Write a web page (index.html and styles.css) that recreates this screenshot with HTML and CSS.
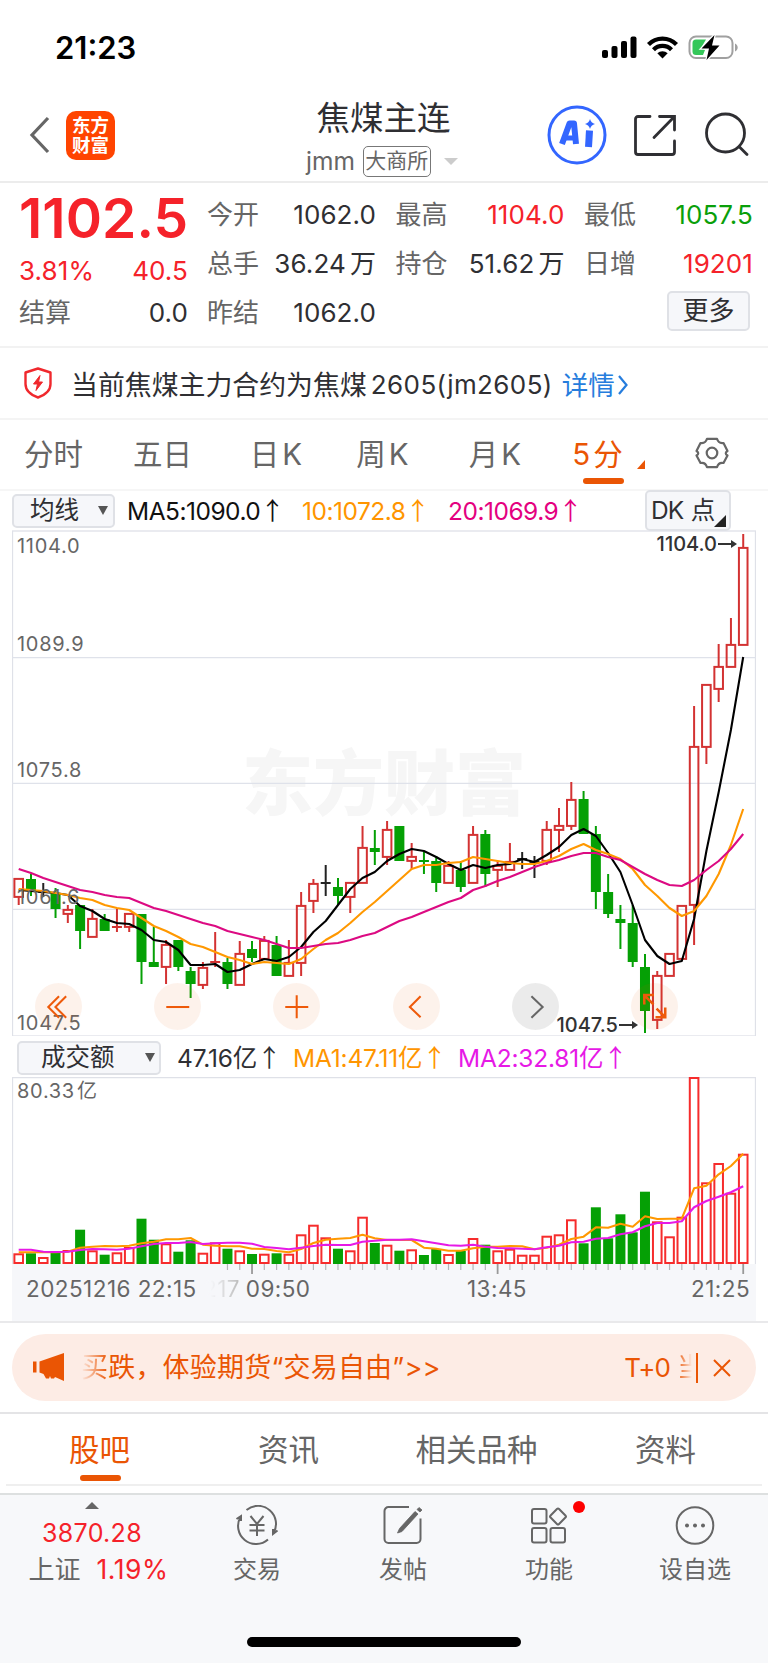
FILE: index.html
```html
<!DOCTYPE html>
<html lang="zh-CN">
    <head>
        <meta charset="utf-8">
        <title>焦煤主连</title>
        <link rel="stylesheet" href="styles.css">
    </head>
    <body>
        <div class="status-bar">
            <span class="clock">21:23</span>
            <svg class="status-icons" width="140" height="28" viewBox="0 0 140 28">
                <rect x="2" y="15" width="6" height="8" rx="2"/>
                <rect x="11.5" y="11" width="6" height="12" rx="2"/>
                <rect x="21" y="6" width="6" height="17" rx="2"/>
                <rect x="30.500" y="1.500" width="6" height="21.500" rx="2"/>
                <g fill="none" stroke="#000" stroke-width="4.200">
                    <path d="M48.500 9.500a19.500 19.500 0 0 1 28 0"/>
                    <path d="M53.500 14.800a12.500 12.500 0 0 1 18 0"/>
                </g>
                <path d="M57.300 18.300a7.500 7.500 0 0 1 10.400 0L62.500 23.500z"/>
                <rect x="89.500" y="1.500" width="43" height="21.500" rx="6.500" fill="none" stroke="#a0a0a0" stroke-width="2"/>
                <path d="M135 8.500c3.600 1.500 3.600 6.500 0 8z" fill="#a0a0a0"/>
                <path d="M96 4.500h10l-5 8.500 4 2-2 5h-7a3.500 3.500 0 0 1-3.500-3.500v-8.500A3.500 3.500 0 0 1 96 4.500z" fill="#34c759"/>
                <path d="M114.500 0l-13 13.500h7.500l-2.500 11.500 13-14.500h-7.500z" stroke="#fff" stroke-width="2.500" paint-order="stroke"/>
            </svg>
        </div>

        <header class="header">
            <div class="header-left">
                <svg width="22" height="40" viewBox="0 0 22 40"><path d="M19 3L3 20l16 17" fill="none" stroke="#666" stroke-width="3.200"/></svg>
                <div class="logo"><span>东方</span><span>财富</span></div>
            </div>
            <div class="title">
                <h1>焦煤主连</h1>
                <div class="subtitle"><span class="code">jmm</span><span class="exchange">大商所</span><i class="arrow-down"></i></div>
            </div>
            <div class="header-right">
                <svg width="60" height="60" viewBox="0 0 60 60" fill="none" stroke="#3366ff">
                    <circle cx="30" cy="30" r="28" stroke-width="3"/>
                    <path d="M15 39L22.500 18.500h4.500L29 39" stroke-width="6" stroke-linejoin="round"/>
                    <path d="M18.500 33h9" stroke-width="5"/>
                    <path d="M42.500 25.500L41.500 42" stroke-width="7"/>
                    <path d="M43 14q1 4 5 5-4 1-5 5-1-4-5-5 4-1 5-5z" fill="#3366ff" stroke="none"/>
                </svg>
                <svg width="44" height="44" viewBox="0 0 44 44" fill="none" stroke="#2f2f33" stroke-width="2.800" stroke-linecap="round">
                    <path d="M17 3.500H5a2.500 2.500 0 0 0-2.500 2.500v33A2.500 2.500 0 0 0 5 41.500h34a2.500 2.500 0 0 0 2.500-2.500V28M26.500 3.500h15V17M41 4L21 24.500"/>
                </svg>
                <svg width="46" height="46" viewBox="0 0 46 46" fill="none" stroke="#2f2f33" stroke-width="2.800" stroke-linecap="round">
                    <circle cx="21.500" cy="21" r="19"/><path d="M35.500 35l7.500 7.500"/>
                </svg>
            </div>
        </header>

        <section class="quote">
            <div class="price-col">
                <div class="price">1102.5</div>
                <div class="pair change"><span>3.81%</span><span>40.5</span></div>
                <div class="pair"><label>结算</label><span>0.0</span></div>
            </div>
            <div class="stats">
                <div class="pair"><label>今开</label><span>1062.0</span></div>
                <div class="pair"><label>最高</label><span class="up">1104.0</span></div>
                <div class="pair"><label>最低</label><span class="down">1057.5</span></div>
                <div class="pair"><label>总手</label><span>36.24<b>万</b></span></div>
                <div class="pair"><label>持仓</label><span>51.62<b>万</b></span></div>
                <div class="pair"><label>日增</label><span class="up">19201</span></div>
                <div class="pair"><label>昨结</label><span>1062.0</span></div>
                <div></div>
                <div class="more"><button>更多</button></div>
            </div>
        </section>

        <section class="notice">
            <svg width="28" height="32" viewBox="0 0 28 32" fill="none" stroke="#f0282d" stroke-width="2.400" stroke-linejoin="round">
                <path d="M14 1.500L26.500 5.500V17c0 7-5.500 11-12.500 13.500C7 28 1.500 24 1.500 17V5.500z"/>
                <path d="M16 8.500l-6.500 8.500h4l-1.500 6.500 6.500-8.500h-4z" fill="#f0282d" stroke-width="1"/>
            </svg>
            <span class="notice-text">当前焦煤主力合约为焦煤</span><span class="notice-code">2605(jm2605)</span><a>详情</a>
            <svg class="chevron" width="12" height="22" viewBox="0 0 12 22"><path d="M2 2l7.500 9L2 20" fill="none" stroke="#267ddd" stroke-width="2.200"/></svg>
        </section>

        <nav class="periods">
            <span>分时</span>
            <span>五日</span>
            <span>日<em>K</em></span>
            <span>周<em>K</em></span>
            <span>月<em>K</em></span>
            <span class="active"><em>5</em>分</span>
            <span class="gear">
                <i class="corner"></i>
                <svg width="34" height="32" viewBox="0 0 34 32" fill="none" stroke="#666" stroke-width="2.200" stroke-linejoin="round">
                    <path d="M12 1.800h10q1.500 5 6.500 4.200l4 8q-3.500 2 0 4.500l-4 7.500q-5-1-6.500 4.200H12q-1.500-5.200-6.500-4.200l-4-7.500q3.500-2.500 0-4.500l4-8q5 .8 6.500-4.200z"/>
                    <circle cx="17" cy="16" r="5.300"/>
                </svg>
            </span>
        </nav>

        <div class="indicator">
            <button class="ma-select">均线<i></i></button>
            <span class="ma ma5">MA5:1090.0<u>↑</u></span>
            <span class="ma ma10">10:1072.8<u>↑</u></span>
            <span class="ma ma20">20:1069.9<u>↑</u></span>
            <button class="dk">DK<b>点</b><i></i></button>
        </div>

        <div class="chart kline">
            <div class="watermark">东方财富</div>
            <svg id="kline" width="744" height="506" viewBox="12 0 744 506"></svg>
            <span class="y-label y1">1104.0</span>
            <span class="y-label y2">1089.9</span>
            <span class="y-label y3">1075.8</span>
            <span class="y-label y4">1061.6</span>
            <span class="y-label y5">1047.5</span>
            <span class="mark high">1104.0<svg width="20" height="10" viewBox="0 0 20 10"><path d="M0 5h14" stroke="#333" stroke-width="2"/><path d="M13 1l6 4-6 4z" fill="#333"/></svg></span>
            <span class="mark low">1047.5<svg width="20" height="10" viewBox="0 0 20 10"><path d="M0 5h14" stroke="#333" stroke-width="2"/><path d="M13 1l6 4-6 4z" fill="#333"/></svg></span>
            <div class="tools">
                <span><svg viewBox="0 0 46 46"><path d="M23.500 13L13 23.500 23.500 34M30.500 13L20 23.500 30.500 34"/></svg></span>
                <span><svg viewBox="0 0 46 46"><path d="M12 23.500h22.500"/></svg></span>
                <span><svg viewBox="0 0 46 46"><path d="M12 23.500h22.500M23.200 12v22.500"/></svg></span>
                <span><svg viewBox="0 0 46 46"><path d="M27 13L16.500 23.500 27 33.500"/></svg></span>
                <span class="off"><svg viewBox="0 0 46 46"><path d="M19 13l11 10.500L19 34"/></svg></span>
                <span class="zoom"><svg viewBox="0 0 46 46"><path d="M22 21l-9-9M13 21v-9.200h9.500M25 25l8.500 8.500M33.500 24v9.500H24"/></svg></span>
            </div>
        </div>

        <div class="indicator volume-info">
            <button class="vol-select">成交额<i></i></button>
            <span class="ma">47.16<b>亿</b><u>↑</u></span>
            <span class="ma ma10">MA1:47.11<b>亿</b><u>↑</u></span>
            <span class="ma vma2">MA2:32.81<b>亿</b><u>↑</u></span>
        </div>

        <div class="chart volume">
            <svg id="volume" width="744" height="187" viewBox="12 0 744 187"></svg>
            <span class="y-label v1">80.33<b>亿</b></span>
        </div>
        <div class="axis">
            <svg id="ticks" width="744" height="12" viewBox="12 0 744 12"></svg>
            <div class="dates">
                <span>20251216 22:15</span>
                <span><s>217</s> 09:50</span>
                <span>13:45</span>
                <span>21:25</span>
            </div>
        </div>

        <div class="banner-wrap">
            <div class="banner">
                <svg width="32" height="30" viewBox="0 0 32 30" fill="#ea5504"><path d="M0 8.500h3.500v11H0zM6.500 8.500L31 0v28l-9-4-1 1.500h-3L17 23l-1 2.500h-3L10.500 21l-4-1.500z"/></svg>
                <span class="banner-text"><span class="fade-in">买</span>跌，体验期货“交易自由”&gt;&gt;</span>
                <span class="t0">T+0</span><span class="fade-out">当</span>
                <svg class="close" width="18" height="18" viewBox="0 0 18 18"><path d="M1 1l16 16M17 1L1 17" stroke="#ea5504" stroke-width="2"/></svg>
            </div>
        </div>

        <nav class="info-tabs">
            <span class="active">股吧</span>
            <span>资讯</span>
            <span>相关品种</span>
            <span>资料</span>
        </nav>

        <footer class="bottom-bar">
            <div class="index">
                <i></i>
                <span class="index-value">3870.28</span>
                <span class="index-row">上证<em>1.19%</em></span>
            </div>
            <div class="item">
                <svg width="44" height="40" viewBox="0 0 44 40" fill="none" stroke="#666" stroke-width="2">
                    <path d="M11.500 5A18 18 0 0 1 38.500 28M33 34.500A18 18 0 0 1 5.500 12M1.500 14l4.500-3v5M42.500 25.500l-4.500 3.500v-5"/>
                    <path d="M15.500 11l6.500 8 6.500-8M22 19v12M14.500 20h15M14.500 25.500h15"/>
                </svg>
                <span>交易</span>
            </div>
            <div class="item">
                <svg width="44" height="40" viewBox="0 0 44 40" fill="none" stroke="#666" stroke-width="2">
                    <path d="M28 2H7.500a4 4 0 0 0-4 4v28a4 4 0 0 0 4 4h28a4 4 0 0 0 4-4V13.500"/>
                    <path d="M34 6.500l3 2.500-16 17.500-4.500 1.500 2-4.500zM36 4.500l2-2 3 2.500-2 2z" fill="#666" stroke-width=".8"/>
                </svg>
                <span>发帖</span>
            </div>
            <div class="item">
                <i class="dot"></i>
                <svg width="44" height="40" viewBox="0 0 44 40" fill="none" stroke="#666" stroke-width="2">
                    <rect x="5" y="4" width="14.500" height="14.500" rx="2"/><rect x="5" y="23" width="14.500" height="14.500" rx="2"/><rect x="23.500" y="23" width="14.500" height="14.500" rx="2"/>
                    <rect x="25" y="5.500" width="12" height="12" rx="1.500" transform="rotate(45 31 11.500)"/>
                </svg>
                <span>功能</span>
            </div>
            <div class="item">
                <svg width="44" height="40" viewBox="0 0 44 40"><circle cx="22" cy="20.500" r="18.300" fill="none" stroke="#666" stroke-width="2"/><g fill="#666"><circle cx="14" cy="20.500" r="2"/><circle cx="22" cy="20.500" r="2"/><circle cx="30" cy="20.500" r="2"/></g></svg>
                <span>设自选</span>
            </div>
            <div class="home-indicator"></div>
        </footer>
        <script src="chart.js"></script>
    </body>
</html>
```
FILE: styles.css
```css
* {
    box-sizing: border-box;
}
body {
    margin: 0;
    width: 768px;
    background: #fff;
    color: #2f2f33;
    font-family: Inter, "Noto Sans CJK SC", sans-serif;
    font-size: 26px;
    line-height: 1;
    white-space: nowrap;
}
svg {
    display: block;
    flex: none;
}
b, em, i, u, s {
    font-weight: inherit;
    font-style: normal;
    text-decoration: none;
}
button {
    font: inherit;
    color: inherit;
    padding: 0;
    background: #f6f7fa;
    border: 2px solid #dfe1e6;
    border-radius: 5px;
}

/* status bar + header */
.status-bar {
    height: 92px;
    padding: 35px 28px 0 55px;
    display: flex;
    justify-content: space-between;
}
.clock {
    font-size: 31px;
    font-weight: 600;
    line-height: 26px;
    color: #000;
}
.header {
    height: 91px;
    border-bottom: 2px solid #ececec;
    display: grid;
    grid-template-columns: 290px 184px 1fr;
}
.header-left {
    display: flex;
    align-items: center;
    gap: 15px;
    padding: 0 0 3px 29px;
}
.logo {
    width: 49px;
    height: 49px;
    border-radius: 10px;
    background: #ff4400;
    color: #fff;
    font-size: 18.500px;
    font-weight: 700;
    line-height: 20px;
    padding-top: 4px;
    text-align: center;
}
.logo span {
    display: block;
}
.title {
    text-align: center;
}
h1 {
    margin: 7px 0 0 3px;
    font-size: 33.500px;
    line-height: 38px;
    font-weight: 400;
}
.subtitle {
    display: flex;
    align-items: center;
    margin: 9px 0 0 16px;
    font-size: 24.500px;
    color: #666;
}
.exchange {
    margin: 0 13px 0 8px;
    width: 68px;
    height: 31px;
    border: 1.5px solid #777;
    border-radius: 5px;
    font-size: 21px;
    line-height: 28px;
}
.arrow-down {
    border: 7px solid transparent;
    border-top: 7px solid #ccc;
    border-bottom: 0;
}
.header-right {
    display: flex;
    align-items: center;
    padding: 0 0 3px 73px;
}
.header-right svg:nth-child(2) {
    margin: 0 27px 0 26px;
}

/* quote */
.quote {
    height: 165px;
    border-bottom: 2px solid #f2f2f2;
    display: flex;
    padding: 7px 14px 0 19px;
    letter-spacing: .1px;
}
.price-col {
    width: 169px;
    margin-right: 19px;
}
.price {
    height: 60px;
    font-size: 55px;
    font-weight: 600;
    line-height: 56px;
    color: #f5222a;
    letter-spacing: .1px;
}
.pair {
    height: 49px;
    display: flex;
    justify-content: space-between;
    align-items: center;
}
.price-col .pair {
    height: 42px;
}
label {
    color: #666;
    letter-spacing: 0;
}
.change, .up {
    color: #f5222a;
}
.down {
    color: #0a9f0a;
}
.stats {
    flex: 1;
    display: grid;
    grid-template-columns: 169px 169px 169px;
    column-gap: 19.500px;
    grid-auto-rows: 49px;
}
.stats b {
    margin-left: 4px;
}
.more {
    display: flex;
    justify-content: flex-end;
    padding: 3px 3px 0 0;
}
.more button {
    width: 83px;
    height: 40px;
    letter-spacing: 0;
    line-height: 34px;
}

/* notice */
.notice {
    height: 72px;
    border-bottom: 2px solid #f4f4f4;
    display: flex;
    align-items: center;
    padding: 0 0 0 24px;
}
.notice-text {
    margin: 4px 4px 0 19px;
    font-size: 26.900px;
}
.notice-code {
    margin: 4px 9px 0 0;
    letter-spacing: .4px;
}
.notice a {
    color: #267ddd;
    margin: 4px 2px 0 0;
    font-size: 26.500px;
}
.chevron {
    margin-top: 4px;
}

/* periods */
.periods {
    height: 71px;
    border-bottom: 2px solid #f6f6f6;
    display: grid;
    grid-template-columns: 107px 111px 116px 97px 128px 77px 1fr;
    font-size: 29.500px;
    line-height: 68px;
    color: #666;
    text-align: center;
}
.periods em {
    margin-left: 3px;
}
.active {
    color: #ea5504;
    position: relative;
}
.periods .active em {
    margin: 0 3px 0 0;
}
.active::after {
    content: "";
    position: absolute;
    left: calc(50% - 15px);
    bottom: 5px;
    width: 41px;
    height: 6px;
    border-radius: 3px;
    background: #ea5504;
}
.gear {
    display: flex;
    align-items: center;
    padding-bottom: 3px;
}
.corner {
    border-left: 8px solid transparent;
    border-bottom: 9px solid #ea5504;
    margin: 23px 50px 0 1px;
}

/* indicator rows */
.indicator {
    height: 39px;
    display: flex;
    align-items: center;
    padding-left: 12px;
    font-size: 24.500px;
}
.indicator button {
    display: flex;
    align-items: center;
    justify-content: space-between;
    height: 34px;
}
.ma-select {
    width: 103px;
    padding: 0 5px 0 16px;
    margin-right: 12px;
}
.ma-select i, .vol-select i {
    border: 5px solid transparent;
    border-top: 9px solid #555;
    border-bottom: 0;
}
.ma {
    letter-spacing: -.5px;
}
.ma5 {
    width: 175px;
    color: #111;
}
.ma10 {
    width: 146px;
    color: #ff9500;
}
.ma20 {
    width: 197px;
    color: #e4007f;
}
.volume-info .vma2 {
    color: #e619e6;
}
u {
    font-family: "Noto Sans CJK SC", sans-serif;
}
.indicator .dk {
    width: 86px;
    height: 41px;
    padding: 0 3px 0 4px;
    letter-spacing: -.9px;
}
.dk i {
    border-left: 12px solid transparent;
    border-bottom: 12px solid #222;
    align-self: flex-end;
    margin: 0 0 2px -8px;
}
.volume-info {
    height: 41px;
    padding: 2px 0 0 17px;
}
.vol-select {
    width: 144px;
    padding: 0 4px 0 22px;
    margin-right: 16px;
}
.volume-info .ma {
    width: 116px;
    letter-spacing: -.2px;
}
.volume-info .ma10 {
    width: 165px;
}

/* charts */
.chart {
    position: relative;
    margin-left: 12px;
    width: 744px;
}
.kline {
    height: 506px;
}
.volume {
    height: 187px;
}
.chart > svg {
    position: relative;
}
.watermark {
    position: absolute;
    left: 230px;
    top: 211px;
    font-size: 71px;
    font-weight: 900;
    line-height: 84px;
    color: #f6f6f6;
}
.y-label {
    position: absolute;
    left: 5px;
    line-height: 20px;
    font-size: 20px;
    letter-spacing: .7px;
    color: #666;
}
.y1 { top: 6px; }
.y2 { top: 104px; }
.y3 { top: 230px; }
.y4 { top: 357px; }
.y5 { top: 483px; }
.v1 { top: 4px; }
.v1 b {
    margin-left: 2px;
}
.mark {
    position: absolute;
    display: flex;
    align-items: center;
    gap: 1px;
    font-size: 20px;
    font-weight: 500;
    color: #333;
}
.high {
    right: 18px;
    top: 4px;
}
.low {
    right: 117px;
    top: 485px;
}
.tools {
    position: absolute;
    left: 23px;
    top: 453px;
    display: flex;
    gap: 72.200px;
}
.tools span {
    width: 47px;
    height: 47px;
    border-radius: 50%;
    background: rgba(234, 85, 4, .08);
}
.tools svg {
    width: 47px;
    height: 47px;
    fill: none;
    stroke: #ee5a0a;
    stroke-width: 2;
}
.tools .off {
    background: rgba(0, 0, 0, .08);
}
.tools .off svg {
    stroke: #666;
}
.tools .zoom svg {
    stroke-width: 2.500;
}
.axis {
    margin-left: 12px;
    width: 744px;
    height: 57px;
    background: #f6f7fa;
}
.dates {
    display: grid;
    grid-template-columns: 177px 264px 224px 1fr;
    padding: 2px 0 0 14px;
    font-size: 22.500px;
    letter-spacing: .45px;
    color: #666;
}
.dates s {
    margin-right: -1px;
    background: linear-gradient(90deg, #f6f7fa 20%, #bbb);
    -webkit-background-clip: text;
    color: transparent;
}

/* banner */
.banner-wrap {
    border-top: 2px solid #e9e9eb;
    border-bottom: 2px solid #e4e4e6;
    height: 93px;
    padding: 11px 12px;
}
.banner {
    height: 67px;
    border-radius: 34px;
    background: #fdece5;
    color: #ea5504;
    display: flex;
    align-items: center;
    padding: 0 25px 0 21px;
    font-size: 27px;
}
.banner-text {
    margin-left: 16px;
    flex: 1;
    letter-spacing: .2px;
}
.fade-in, .fade-out {
    background: linear-gradient(90deg, #fdece5, #ea5504);
    -webkit-background-clip: text;
    color: transparent;
}
.t0 {
    font-size: 26px;
    letter-spacing: -.9px;
}
.fade-out {
    width: 15px;
    margin: 0 4px 0 7px;
    overflow: hidden;
    background-image: linear-gradient(270deg, #fdece5, #ea5504);
}
.close {
    box-sizing: content-box;
    border-left: 2px solid #ea5504;
    padding: 6px 0 6px 15px;
}

/* info tabs */
.info-tabs {
    height: 72px;
    margin: 0 6px;
    border-bottom: 2px solid #efefef;
    display: grid;
    grid-template-columns: 187px 191px 185px 1fr;
    font-size: 30.500px;
    line-height: 71px;
    text-align: center;
    color: #666;
}
.info-tabs .active::after {
    left: 74px;
    bottom: 4px;
}

/* bottom bar */
.bottom-bar {
    position: relative;
    margin-top: 7px;
    height: 171px;
    border-top: 2px solid #dde0e0;
    background: #f7f8fa;
    display: grid;
    grid-template-columns: 184px 146px 146px 146px 146px;
    color: #666;
}
.index {
    display: flex;
    flex-direction: column;
    align-items: center;
    padding-top: 7px;
}
.index i {
    border: 7px solid transparent;
    border-bottom: 7px solid #666;
    border-top: 0;
}
.index-value {
    margin: 12px 0 10px;
    font-size: 25px;
    letter-spacing: .3px;
    color: #f5222a;
}
.index-row {
    padding-left: 13px;
}
.index em {
    margin-left: 16px;
    letter-spacing: .5px;
    font-size: 26.500px;
    color: #f5222a;
}
.item {
    position: relative;
    display: flex;
    flex-direction: column;
    align-items: center;
    padding-top: 10px;
    font-size: 24px;
}
.item span {
    margin-top: 13px;
}
.dot {
    position: absolute;
    left: 97px;
    top: 6px;
    width: 12px;
    height: 12px;
    border-radius: 50%;
    background: #fe0000;
}
.home-indicator {
    position: absolute;
    left: 247px;
    bottom: 17px;
    width: 274px;
    height: 10px;
    border-radius: 5px;
    background: #000;
}
```
FILE: chart.js
```js
const X0 = 18.7, STEP = 12.28;
const RED = "#d33232", GREEN = "#05a005", BLACK = "#222";
const x = i => X0 + STEP * i;

// color, high, body top, body bottom, low
const candles = [
    ["r",348,348,367,375],["g",344,349,361,366],["k",353,362,362,367],["g",358,363,379,388],["r",375,379,384,393],
    ["g",375,375,401,419],["r",379,388,407,407],["g",384,389,401,401],["r",379,397,397,402],["r",383,383,397,402],
    ["g",384,384,432,454],["g",397,432,437,437],["r",410,414,437,454],["g",410,410,437,441],["g",437,441,454,468],
    ["r",432,437,455,459],["r",402,432,432,437],["g",428,432,454,459],["r",411,423,455,455],["g",411,419,428,432],
    ["r",406,410,429,429],["g",406,415,446,446],["r",410,432,446,446],["r",362,375,433,446],["r",349,353,371,383],
    ["k",335,353,353,366],["g",348,357,366,375],["r",352,352,367,383],["r",296,317,353,353],["g",300,318,322,335],
    ["r",291,299,327,335],["g",296,296,331,331],["r",313,326,331,339],["g",322,331,331,344],["g",326,331,353,362],
    ["r",331,335,353,353],["g",331,340,357,362],["r",296,304,353,353],["g",300,304,344,357],["r",331,335,340,357],
    ["r",313,331,340,340],["k",322,329,329,339],["k",326,332,332,348],["r",291,299,331,335],["r",278,295,300,322],
    ["r",252,269,296,300],["g",261,269,304,304],["g",296,304,362,379],["g",344,362,384,388],["g",375,389,393,419],
    ["g",375,393,432,437],["g",424,437,481,503],["r",441,445,490,499],["r",423,423,446,446],["r",375,375,429,429],
    ["r",176,216,375,415],["r",154,154,217,234],["r",114,136,159,172],["r",88,114,137,137],["r",4,17,115,115]
];
const ma5 = [360,361,362,363,365,376,381,389,393,394,400,410,412,420,435,435,434,442,440,434,429,431,427,417,402,391,375,359,348,342,331,324,319,321,327,334,340,335,338,335,334,329,332,325,317,305,299,306,323,342,375,410,426,434,431,389,321,262,200,127];
const ma10 = [359,360,361,363,365,368,370,375,378,380,388,396,401,407,414,417,422,427,430,434,432,433,434,429,419,410,403,393,382,372,361,350,339,335,335,333,332,327,329,331,333,334,334,331,326,319,314,320,324,329,339,355,366,378,386,381,366,344,315,279];
const ma20 = [339,343,348,352,356,360,362,365,367,368,373,378,381,385,389,393,396,401,404,407,410,414,418,418,416,414,413,410,406,403,397,391,387,382,377,372,368,360,356,351,347,342,337,333,330,326,323,323,327,330,337,344,350,355,356,350,340,331,319,304];

const volumes = [10.7,10.7,7,12.7,14,34.3,13.7,9.3,11.7,17,45.3,24.3,20.7,12.3,23.7,11.3,21.7,15.3,13.7,10,10.3,10.7,10.3,29.7,39.3,26.7,15.3,13.7,47.3,21,19.3,13.3,14.7,9,15,10,13,26,19.3,13.7,15.3,9.3,9.3,28.3,29.7,44.7,20.7,56.7,25.7,49.7,31.7,72.3,42.7,27.7,47.3,187,81.7,101,71.3,110.3];
const volColors = "rgrgrgrgrrggrggrrgrgrgrrrrgrrgrgrggrgrgrrrrrrrggggggrrrrrrrr";
const vma1 = [11.7,11.7,11.7,11.7,12.3,16.3,17.3,18,17.7,18.3,20.7,22.3,24.7,24.7,26,19.3,18.3,17.7,17.7,15.3,15,13,11.7,15,21,24.3,25.3,26,29.3,25.7,24,24,24,16.3,15.3,13.3,13.3,15.7,17.3,17.3,18,17.7,14.7,16.3,19.3,25,27.3,36.7,36.3,40.3,37.3,47.7,45,45.3,45.3,75.7,78.3,89.7,98,110.3];
const vma2 = [14.3,14.3,12.3,12,12.3,14,15,14.7,14.3,15.3,17.7,20,21,21,22,20,20.7,21.3,21.3,20.3,17,16,14.7,16.3,18,19.3,19,19,22.3,23.3,24.3,24.3,24.7,22.7,20.7,18.7,18.3,19.3,17.3,16,15.7,15.3,14.7,16.7,18.3,21.7,22.3,25.3,26,29.7,31.7,37.7,41,41,42.7,56.7,63,67.3,71.7,77.7];

function line(values, color, flip) {
    const pts = values.map((v, i) => x(i).toFixed(1) + "," + (flip ? flip - v : v)).join(" ");
    return `<polyline points="${pts}" fill="none" stroke="${color}" stroke-width="2.100" stroke-linejoin="round"/>`;
}

function seg(x1, y1, x2, y2, color, w) {
    return `<line x1="${x1}" y1="${y1}" x2="${x2}" y2="${y2}" stroke="${color}" stroke-width="${w}"/>`;
}

let k = `<rect x="12.5" y="1" width="743" height="505" fill="none" stroke="#dfe1e8" stroke-width="1.300"/>`;
[127.7, 253.3, 379.3].forEach(y => k += seg(12, y, 756, y, "#dfe2ea", 1.3));
candles.forEach(([c, high, top, bottom, low], i) => {
    const color = c == "r" ? RED : c == "g" ? GREEN : BLACK;
    const cx = x(i);
    if (bottom - top < 2) {
        k += seg(cx, high, cx, low, color, 2) + seg(cx - 5, top, cx + 5, top, color, 2);
        return;
    }
    k += seg(cx, high, cx, top, color, 2) + seg(cx, bottom, cx, low, color, 2);
    if (c == "r") {
        k += `<rect x="${cx - 4.3}" y="${top + .9}" width="8.600" height="${bottom - top - 1}" fill="none" stroke="${color}" stroke-width="2"/>`;
    } else {
        k += `<rect x="${cx - 5}" y="${top}" width="10" height="${bottom - top}" fill="${color}"/>`;
    }
});
k += line(ma5, "#000") + line(ma10, "#ff9800") + line(ma20, "#dc0a82");
document.getElementById("kline").innerHTML = k;

let v = `<path d="M12.500 187V.700h743V187" fill="none" stroke="#dfe1e8" stroke-width="1.300"/>`;
volumes.forEach((h, i) => {
    const cx = x(i);
    if (volColors[i] == "r") {
        v += `<rect x="${cx - 4.3}" y="${188 - h}" width="8.600" height="${h - 2}" fill="none" stroke="#f62c2c" stroke-width="2"/>`;
    } else {
        v += `<rect x="${cx - 5}" y="${187 - h}" width="10" height="${h}" fill="${GREEN}"/>`;
    }
});
v += line(vma1, "#ff9800", 187) + line(vma2, "#e619e6", 187);
document.getElementById("volume").innerHTML = v;

let t = "";
for (let i = 17; i < 60; i++) {
    const big = i == 19 || i == 39 || i == 59;
    t += seg(x(i), 0, x(i), big ? 10 : 6, big ? "#999" : "#b5b5b8", big ? 1.8 : 1.2);
}
document.getElementById("ticks").innerHTML = t;
```
